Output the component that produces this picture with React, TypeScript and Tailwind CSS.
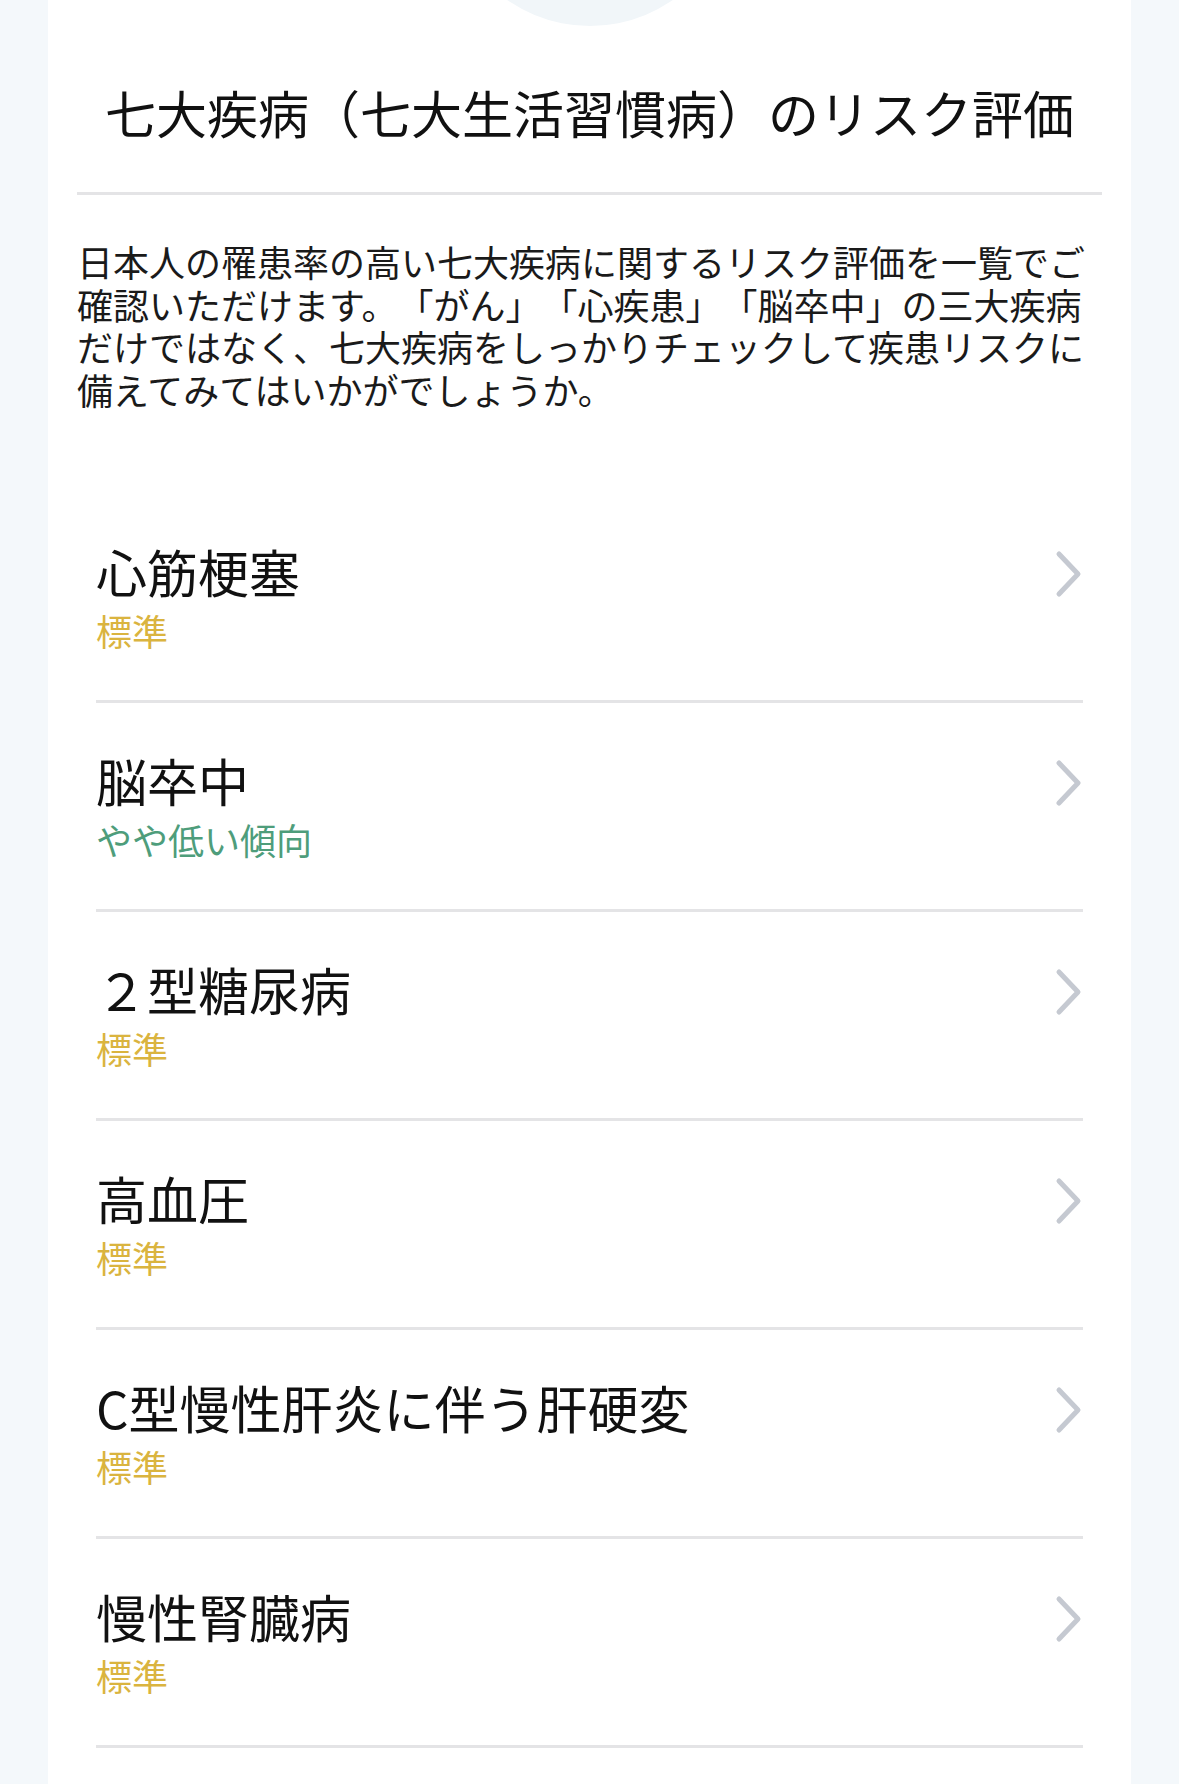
import React from "react";

const diseases = [
  { name: "心筋梗塞", risk: "標準", tone: "normal" },
  { name: "脳卒中", risk: "やや低い傾向", tone: "low" },
  { name: "２型糖尿病", risk: "標準", tone: "normal" },
  { name: "高血圧", risk: "標準", tone: "normal" },
  { name: "C型慢性肝炎に伴う肝硬変", risk: "標準", tone: "normal" },
  { name: "慢性腎臓病", risk: "標準", tone: "normal" },
];

function Chevron() {
  return (
    <svg className="mt-[6px]" width="28" height="48" viewBox="0 0 28 48" fill="none">
      <path
        d="M4 4 L23 24 L4 44"
        stroke="#c5c9d1"
        strokeWidth="5"
        strokeLinecap="round"
        strokeLinejoin="round"
      />
    </svg>
  );
}

export default function App() {
  return (
    <div
      className="min-h-[1784px] bg-[#f4f8fb] px-[48px] text-[#111]"
      style={{ fontFamily: '"Noto Sans CJK JP", "Noto Sans", sans-serif' }}
    >
      <div className="relative overflow-hidden bg-white min-h-[1784px] pt-[82px]">
        <div className="absolute left-1/2 -translate-x-1/2 top-[-264px] w-[290px] h-[290px] rounded-full bg-[#f1f6f9]" />

        <div className="relative px-[29px]">
          <h1 className="text-center text-[51px] leading-[60px] font-normal">
            七大疾病（七大生活習慣病）のリスク評価
          </h1>
          <div className="mt-[50px] h-[3px] bg-[#e4e4e6]" />
          <p className="mt-[45px] text-[36px] leading-[42.5px] text-[#1a1a1a] [text-spacing-trim:space-all]">
            日本人の罹患率の高い七大疾病に関するリスク評価を一覧でご
            <br />
            確認いただけます。「がん」「心疾患」「脳卒中」の三大疾病
            <br />
            だけではなく、七大疾病をしっかりチェックして疾患リスクに
            <br />
            備えてみてはいかがでしょうか。
          </p>
        </div>

        <ul className="mt-[83.5px] px-[48px]">
          {diseases.map((d) => (
            <li
              key={d.name}
              className="pt-[45px] pb-[46px] border-b-[3px] border-[#e4e4e6]"
            >
              <div className="flex items-center justify-between h-[64px]">
                <span className="text-[51px] leading-[64px]">{d.name}</span>
                <Chevron />
              </div>
              <div
                className={
                  d.tone === "low"
                    ? "mt-[3px] text-[36px] leading-[48px] text-[#4e9d7b]"
                    : "mt-[3px] text-[36px] leading-[48px] text-[#dab43f]"
                }
              >
                {d.risk}
              </div>
            </li>
          ))}
        </ul>
      </div>
    </div>
  );
}
